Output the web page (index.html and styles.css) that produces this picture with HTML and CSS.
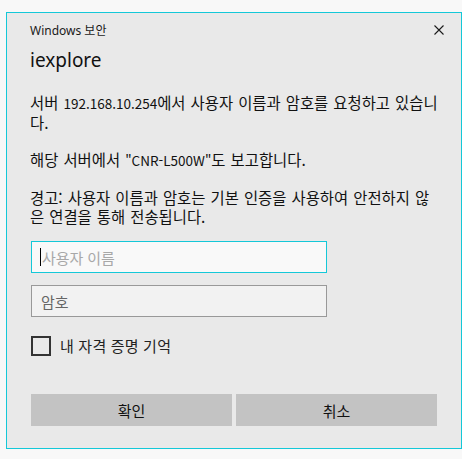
FILE: index.html
```html
<!DOCTYPE html>
<html lang="ko">
<head>
<meta charset="utf-8">
<link rel="stylesheet" href="styles.css">
</head>
<body>
<div class="dialog">
  <div class="titlebar">
    <span class="title">Windows 보안</span>
    <svg class="close" width="10" height="10" viewBox="0 0 10 10"><path d="M0.5 0.5 L9.5 9.5 M9.5 0.5 L0.5 9.5" stroke="#1a1a1a" stroke-width="1.1" fill="none"/></svg>
  </div>
  <div class="content">
    <div class="app">iexplore</div>
    <p class="msg">서버 <span class="lat">192.168.10.254</span>에서 사용자 이름과 암호를 요청하고 있습니다.</p>
    <p class="msg">해당 서버에서 <span class="lat">"CNR-L500W"</span>도 보고합니다.</p>
    <p class="msg">경고: 사용자 이름과 암호는 기본 인증을 사용하여 안전하지 않은 연결을 통해 전송됩니다.</p>
    <div class="field focused"><span class="caret"></span><span class="ph">사용자 이름</span></div>
    <div class="field"><span class="ph dark">암호</span></div>
    <div class="check"><span class="box"></span><span class="label">내 자격 증명 기억</span></div>
    <div class="buttons">
      <div class="btn">확인</div>
      <div class="btn">취소</div>
    </div>
  </div>
</div>
</body>
</html>
```
FILE: styles.css
```css
html, body {
  margin: 0;
  padding: 0;
  background: #f8f8f8;
}
body {
  font-family: "Noto Sans", "Noto Sans CJK KR", sans-serif;
  color: #111;
}
.dialog {
  margin: 12px 0 0 6px;
  width: 454px;
  height: 435px;
  border: 1px solid #14c8d8;
  background: #e9e9e9;
  box-sizing: content-box;
}
.titlebar {
  display: flex;
  align-items: center;
  justify-content: space-between;
  height: 32px;
  padding: 0 17px 0 23px;
}
.title {
  font-size: 12px;
  color: #1a1a1a;
  margin-top: 1px;
}
.close {
  margin-top: 1px;
}
.content {
  padding: 0 22px 0 23px;
}
.app {
  font-size: 19px;
  line-height: 26px;
  margin-top: 2px;
  color: #111;
}
.msg {
  margin: 0;
  width: 409px;
  font-family: "Noto Sans CJK KR", "Noto Sans", sans-serif;
  font-size: 15.4px;
  line-height: 19px;
  word-spacing: 0.8px;
  color: #111;
}
.lat {
  font-size: 13.5px;
}
.app + .msg {
  margin-top: 20px;
}
.msg + .msg {
  margin-top: 18px;
}
.field {
  box-sizing: border-box;
  width: 296px;
  height: 32px;
  margin-left: 1px;
  border: 1px solid #999;
  background: #f2f2f2;
  display: flex;
  align-items: center;
  padding-left: 9px;
  font-size: 15px;
}
.field.focused {
  margin-top: 15px;
  border-color: #14c8d8;
  background: #f9f9f9;
  padding-left: 8px;
}
.field + .field {
  margin-top: 12px;
}
.caret {
  width: 1px;
  height: 18px;
  background: #000;
  margin-right: 1px;
}
.ph {
  color: #a8a8a8;
}
.ph.dark {
  color: #666;
}
.check {
  display: flex;
  align-items: center;
  margin: 18px 0 0 1px;
}
.box {
  box-sizing: border-box;
  width: 20px;
  height: 20px;
  border: 2px solid #333;
}
.label {
  margin-left: 9px;
  font-size: 15px;
  letter-spacing: 0.3px;
  color: #222;
}
.buttons {
  display: flex;
  gap: 4px;
  margin: 38px 0 0 1px;
  width: 406px;
}
.btn {
  flex: 1;
  height: 32px;
  background: #c3c3c3;
  display: flex;
  align-items: center;
  justify-content: center;
  font-size: 15px;
  color: #111;
}
```
